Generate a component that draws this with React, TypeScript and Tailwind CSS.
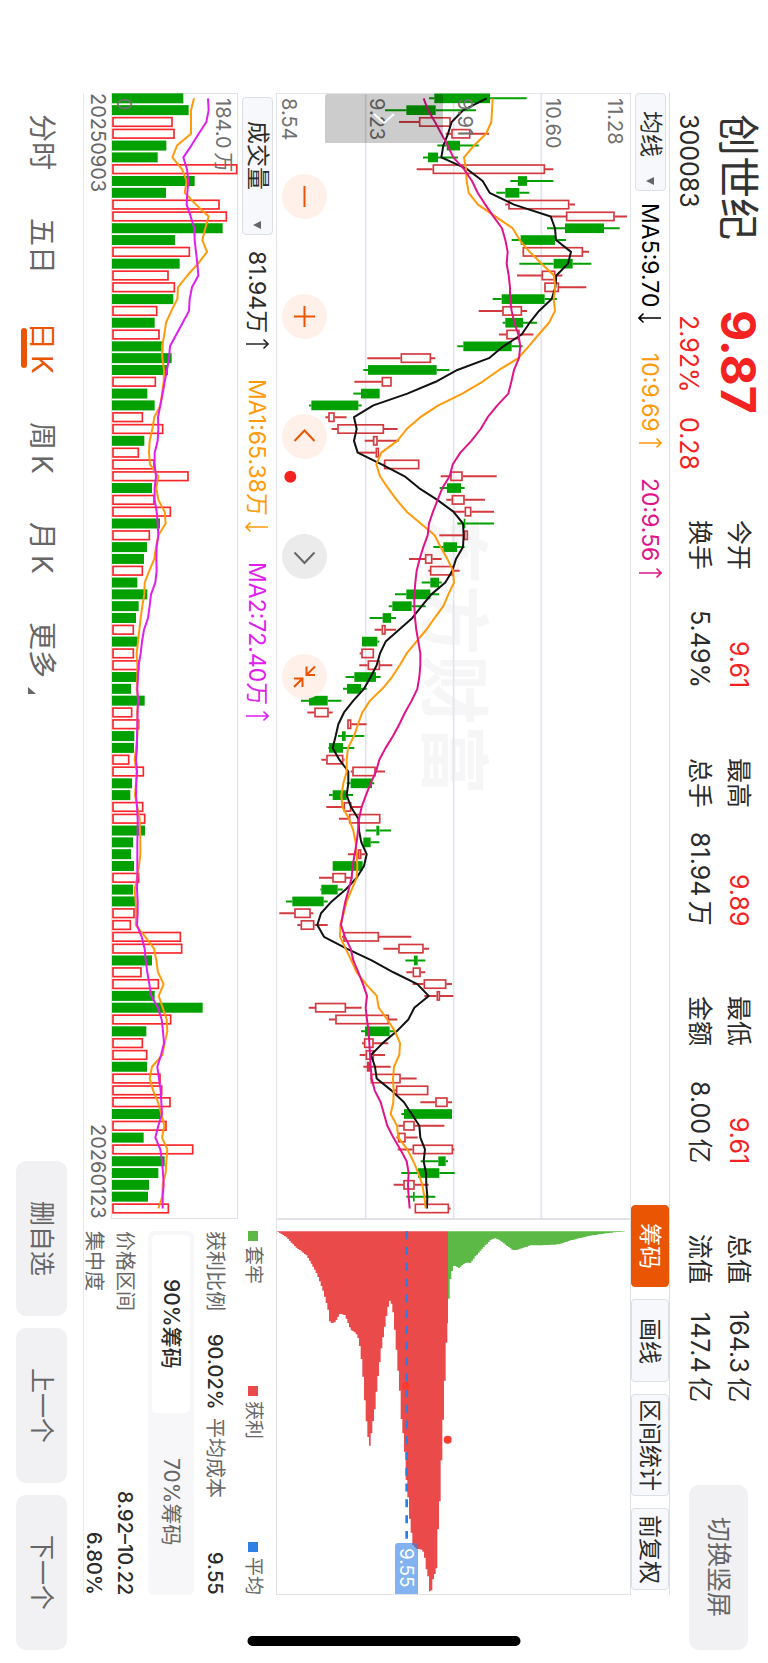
import React from "react";

const GREEN = "#02a000";
const CANDLE_RED = "#d23a40";
const VOLUME_RED = "#f9262b";

// Chart space: three units per pixel, one trading day every STEP units.
const FIRST = 295;
const STEP = 35.43;
const dayY = (i: number) => FIRST + STEP * i;

type Candle = [string, number, number, number, number];

// direction, low, body start, body end, high
const candles: Candle[] = [
  ["g", 1287, 1303, 1470, 1580], ["g", 1155, 1219, 1307, 1428], ["r", 1197, 1257, 1352, 1352],
  ["r", 1337, 1354, 1411, 1467], ["g", 1312, 1340, 1380, 1436], ["g", 1269, 1284, 1314, 1374],
  ["r", 1250, 1298, 1635, 1660], ["g", 1531, 1554, 1581, 1660], ["g", 1489, 1516, 1558, 1588],
  ["r", 1516, 1525, 1708, 1725], ["r", 1652, 1698, 1844, 1881], ["g", 1641, 1695, 1812, 1859],
  ["g", 1535, 1562, 1665, 1698], ["r", 1567, 1568, 1749, 1767], ["g", 1558, 1661, 1718, 1774],
  ["r", 1551, 1625, 1666, 1687], ["r", 1632, 1633, 1677, 1759], ["g", 1478, 1505, 1634, 1671],
  ["r", 1436, 1507, 1566, 1581], ["g", 1508, 1516, 1569, 1611], ["r", 1497, 1519, 1559, 1600],
  ["g", 1372, 1390, 1535, 1568], ["r", 1102, 1202, 1293, 1306], ["g", 1090, 1104, 1310, 1348],
  ["r", 1063, 1145, 1175, 1175], ["g", 1060, 1083, 1139, 1139], ["g", 927, 934, 1075, 1085],
  ["r", 976, 985, 1004, 1040], ["r", 995, 1012, 1152, 1193], ["r", 1094, 1119, 1133, 1196],
  ["r", 1075, 1127, 1137, 1137], ["r", 1150, 1152, 1258, 1258], ["r", 1322, 1351, 1388, 1490],
  ["g", 1319, 1341, 1383, 1394], ["r", 1339, 1355, 1394, 1455], ["r", 1360, 1394, 1414, 1482],
  ["g", 1372, 1391, 1396, 1482], ["r", 1318, 1392, 1404, 1404], ["g", 1300, 1330, 1371, 1394],
  ["r", 1227, 1275, 1297, 1325], ["r", 1285, 1290, 1360, 1379], ["g", 1265, 1291, 1317, 1325],
  ["g", 1185, 1219, 1291, 1317], ["g", 1166, 1177, 1235, 1277], ["g", 1109, 1148, 1173, 1188],
  ["r", 1124, 1145, 1157, 1188], ["g", 1086, 1086, 1132, 1138], ["r", 1079, 1084, 1122, 1122],
  ["r", 1078, 1103, 1140, 1177], ["g", 1037, 1063, 1128, 1142], ["g", 1029, 1041, 1083, 1100],
  ["g", 903, 927, 983, 1024], ["r", 922, 943, 986, 998], ["r", 1041, 1042, 1054, 1100],
  ["g", 1014, 1026, 1037, 1093], ["g", 985, 987, 1029, 1063], ["r", 964, 979, 1030, 1034],
  ["r", 1052, 1057, 1127, 1155], ["g", 1040, 1052, 1116, 1123], ["g", 987, 998, 1040, 1059],
  ["r", 979, 1031, 1054, 1085], ["r", 1017, 1047, 1141, 1142], ["g", 1097, 1129, 1138, 1173],
  ["g", 1088, 1090, 1112, 1138], ["r", 1044, 1074, 1084, 1095], ["g", 998, 998, 1088, 1088],
  ["r", 957, 997, 1038, 1058], ["g", 961, 964, 1013, 1028], ["g", 858, 877, 971, 983],
  ["r", 838, 883, 932, 940], ["r", 892, 902, 943, 983], ["r", 1026, 1030, 1137, 1234],
  ["r", 1150, 1195, 1271, 1287], ["g", 1216, 1242, 1253, 1276], ["r", 1219, 1238, 1262, 1276],
  ["r", 1238, 1271, 1339, 1356], ["r", 1273, 1310, 1320, 1360], ["r", 926, 945, 1038, 1085],
  ["r", 987, 1006, 1167, 1192], ["g", 1083, 1095, 1169, 1182], ["r", 1086, 1092, 1121, 1165],
  ["r", 1079, 1097, 1122, 1155], ["r", 1090, 1101, 1110, 1172], ["r", 1110, 1112, 1202, 1250],
  ["r", 1180, 1188, 1285, 1285], ["r", 1261, 1306, 1343, 1356], ["g", 1204, 1212, 1356, 1356],
  ["r", 1195, 1210, 1244, 1333], ["r", 1189, 1194, 1217, 1253], ["r", 1193, 1238, 1359, 1363],
  ["g", 1262, 1315, 1337, 1344], ["g", 1204, 1254, 1318, 1364], ["r", 1181, 1210, 1244, 1286],
  ["g", 1219, 1239, 1244, 1306], ["r", 1244, 1244, 1347, 1352],
];

const ma5 = [
  1460, 1390, 1355, 1344, 1330, 1324, 1402, 1448, 1469, 1542, 1652, 1665, 1668, 1713, 1704, 1669, 1666, 1655, 1617,
  1589, 1565, 1510, 1467, 1372, 1307, 1222, 1120, 1062, 1070, 1062, 1073, 1145, 1214, 1257, 1312, 1360, 1389, 1391,
  1389, 1368, 1357, 1336, 1294, 1265, 1237, 1197, 1157, 1140, 1130, 1112, 1092, 1060, 1032, 1015, 1007, 998, 1018,
  1045, 1045, 1040, 1053, 1075, 1077, 1084, 1100, 1092, 1070, 1037, 995, 963, 952, 972, 1040, 1115, 1180, 1252, 1286,
  1243, 1225, 1190, 1148, 1113, 1125, 1130, 1174, 1212, 1235, 1258, 1261, 1275, 1271, 1278, 1279, 1282, 1281,
];

const ma10 = [
  1478, 1476, 1474, 1458, 1422, 1392, 1398, 1400, 1406, 1434, 1486, 1538, 1559, 1589, 1625, 1662, 1666, 1661, 1665,
  1647, 1616, 1586, 1555, 1497, 1447, 1387, 1315, 1261, 1220, 1192, 1144, 1129, 1140, 1164, 1190, 1220, 1262, 1304,
  1322, 1342, 1359, 1362, 1345, 1330, 1304, 1279, 1249, 1220, 1199, 1176, 1147, 1110, 1087, 1074, 1062, 1044, 1040,
  1040, 1030, 1024, 1027, 1047, 1060, 1067, 1070, 1072, 1070, 1055, 1040, 1031, 1021, 1020, 1037, 1054, 1070, 1098,
  1130, 1136, 1162, 1185, 1200, 1198, 1182, 1179, 1181, 1180, 1172, 1191, 1195, 1222, 1240, 1255, 1267, 1273, 1277,
];

const ma20 = [
  1271, 1284, 1305, 1324, 1343, 1360, 1392, 1416, 1433, 1456, 1480, 1506, 1516, 1523, 1520, 1526, 1530, 1530, 1535,
  1543, 1555, 1561, 1557, 1542, 1534, 1525, 1492, 1463, 1442, 1414, 1381, 1358, 1349, 1327, 1313, 1299, 1287, 1283,
  1270, 1259, 1250, 1246, 1243, 1243, 1245, 1249, 1255, 1261, 1261, 1258, 1252, 1235, 1215, 1198, 1179, 1157, 1138,
  1128, 1112, 1098, 1085, 1077, 1074, 1070, 1064, 1058, 1055, 1046, 1036, 1029, 1023, 1035, 1052, 1060, 1075, 1089,
  1101, 1097, 1101, 1106, 1108, 1110, 1112, 1115, 1124, 1142, 1152, 1162, 1180, 1201, 1220, 1226, 1224, 1226, 1229,
];

const VOLUME_BASE = 336;
const volumeDirections = [
  "ggrrggrggr",
  "rggrgrrgrg",
  "rgggrggrrg",
  "rrrgrrgrgg",
  "rggggrgrrg",
  "ggrrggrrgg",
  "rrggggrggr",
  "rrrgrrggrg",
  "rrgrrrgrgr",
  "ggggr",
].join("");
const volumes = [
  550, 566, 518, 524, 499, 473, 712, 584, 498, 659, 681, 668, 525, 570, 539, 506, 525, 520, 472, 464, 479, 490, 515,
  504, 468, 442, 464, 429, 490, 433, 417, 464, 566, 456, 464, 513, 480, 450, 441, 432, 429, 412, 442, 416, 408, 402,
  413, 402, 418, 412, 393, 434, 397, 418, 403, 402, 388, 432, 396, 391, 430, 436, 435, 399, 393, 402, 418, 399, 406,
  404, 393, 543, 547, 456, 425, 477, 464, 608, 514, 439, 429, 442, 441, 482, 487, 512, 482, 500, 431, 580, 494, 475,
  447, 444, 507,
];

const volumeMa1 = [
  582, 573, 573, 573, 531, 517, 546, 560, 554, 588, 626, 616, 607, 621, 594, 562, 534, 532, 514, 498, 493, 486, 487,
  492, 491, 486, 481, 463, 457, 449, 447, 450, 475, 469, 475, 494, 497, 475, 468, 463, 448, 434, 433, 427, 422, 418,
  414, 410, 412, 412, 410, 415, 411, 413, 412, 408, 404, 410, 408, 405, 412, 419, 420, 421, 421, 417, 411, 404, 407,
  409, 407, 436, 462, 469, 474, 491, 476, 488, 500, 502, 494, 487, 456, 449, 459, 474, 484, 493, 486, 502, 499, 497,
  488, 487, 475,
];

const volumeMa2 = [
  624, 626, 619, 596, 574, 550, 561, 565, 562, 560, 572, 583, 584, 588, 592, 595, 576, 569, 567, 548, 529, 510, 507,
  501, 494, 488, 481, 474, 475, 473, 464, 464, 468, 464, 464, 470, 473, 475, 470, 469, 470, 466, 453, 449, 444, 432,
  426, 422, 416, 414, 412, 414, 413, 412, 411, 411, 408, 411, 409, 408, 411, 413, 413, 412, 412, 412, 412, 411, 413,
  413, 411, 425, 434, 437, 442, 448, 454, 474, 485, 489, 492, 483, 472, 477, 482, 484, 486, 475, 466, 481, 486, 489,
  491, 488, 488,
];

const linePoints = (values: number[]) => values.map((v, i) => `${v},${dayY(i).toFixed(1)}`).join(" ");

// Chip distribution outline: price position, amount of chips.
const CHIP_BASE = 3694;
const profitOutline: [number, number][] = [
  [832, 0], [860, 18], [886, 46], [920, 72], [938, 103], [948, 121], [960, 151], [969, 176], [976, 202], [983, 228],
  [988, 251], [990, 276], [1006, 273], [1013, 259], [1020, 247], [1035, 251], [1041, 266], [1052, 295], [1067, 304],
  [1074, 318], [1080, 346], [1084, 378], [1089, 429], [1094, 500], [1099, 566], [1103, 600], [1107, 646], [1111, 641],
  [1116, 591], [1121, 559], [1126, 523], [1131, 463], [1136, 421], [1141, 380], [1146, 338], [1151, 309], [1156, 276],
  [1161, 244], [1166, 218], [1170, 206], [1175, 218], [1180, 246], [1185, 300], [1190, 361], [1195, 424], [1200, 484],
  [1204, 559], [1209, 601], [1214, 652], [1219, 741], [1224, 791], [1229, 858], [1234, 900], [1239, 940], [1248, 952],
  [1268, 956], [1274, 975], [1280, 1018], [1286, 1040], [1290, 1086], [1294, 1080], [1300, 1041], [1308, 1018],
  [1312, 1000], [1315, 873], [1319, 873], [1320, 747], [1324, 747], [1325, 626], [1329, 626], [1330, 504], [1334, 504],
  [1335, 391], [1339, 391], [1340, 276], [1344, 276],
];
const trappedOutline: [number, number][] = [
  [1344, 202], [1348, 202], [1349, 143], [1353, 143], [1354, 119], [1358, 119], [1359, 104], [1368, 104], [1376, 110],
  [1386, 102], [1395, 95], [1406, 93], [1410, 97], [1426, 76], [1452, 46], [1475, 24], [1486, 21], [1498, 25],
  [1522, 44], [1538, 56], [1550, 56], [1592, 42], [1622, 42], [1676, 39], [1712, 27], [1772, 13], [1832, 4], [1882, 0],
];

const amountAt = (outline: [number, number][], x: number) => {
  for (let i = 1; i < outline.length; i++) {
    const [x0, a0] = outline[i - 1];
    const [x1, a1] = outline[i];
    if (x <= x1) return a0 + ((a1 - a0) * (x - x0)) / (x1 - x0 || 1);
  }
  return 0;
};

const steppedPath = (outline: [number, number][]) => {
  const start = outline[0][0];
  const end = outline[outline.length - 1][0];
  let d = `M${start} ${CHIP_BASE}`;
  for (let x = start; x < end; x += 5) {
    const next = Math.min(x + 5, end);
    d += `V${(CHIP_BASE + amountAt(outline, (x + next) / 2)).toFixed(0)}H${next}`;
  }
  return `${d}V${CHIP_BASE}Z`;
};

function Arrow({ up = false }: { up?: boolean }) {
  return (
    <svg viewBox="0 0 24 12" className="mt-[5px] h-3 w-6" fill="none" stroke="currentColor" strokeWidth="1.6" aria-hidden>
      {up ? <path d="M1 6H23M18.5 1.5L23 6L18.5 10.5" /> : <path d="M23 6H1M5.500 1.5L1 6L5.500 10.5" />}
    </svg>
  );
}

function Indicator({ text, up, className }: { text: string; up?: boolean; className: string }) {
  return (
    <span className={`flex items-center text-[23px] leading-[30px] ${className}`}>
      {text}
      <Arrow up={up} />
    </span>
  );
}

function Picker({ label, value, className }: { label: string; value: string; className: string }) {
  return (
    <span className="relative flex w-[31px]">
      <select
        aria-label={label}
        defaultValue={value}
        className={`w-full appearance-none rounded-[4px] border border-[#dcdfe5] bg-[#f7f8fb] text-[23px] leading-[29px] text-[#2a2a2a] [text-orientation:sideways] [writing-mode:vertical-rl] ${className}`}
      >
        <option>{value}</option>
      </select>
      <svg viewBox="0 0 8 8" className="pointer-events-none absolute bottom-[6px] left-[11px] size-2 fill-[#666]" aria-hidden>
        <path d="M0 4L8 0V8Z" />
      </svg>
    </span>
  );
}

const stats = [
  [["今开", "9.61", true], ["换手", "5.49%", false]],
  [["最高", "9.89", true], ["总手", "81.94\u2009万", false]],
  [["最低", "9.61", true], ["金额", "8.00\u2009亿", false]],
  [["总值", "164.3\u2009亿", false], ["流值", "147.4\u2009亿", false]],
] as [string, string, boolean][][];

function Header() {
  return (
    <header className="flex w-[98px] shrink-0 items-start pt-[114px] pb-[13px]">
      <div className="h-[196px]">
        <h1 className="text-[42px] leading-[60px] text-[#333]">创世纪</h1>
        <p className="text-[25px] leading-[38px] text-[#2a2a2a]">300083</p>
      </div>
      <div className="h-[210px] text-[#f52222]">
        <p className="text-[48px] leading-[60px] font-bold">9.87</p>
        <p className="flex gap-6 pt-[5px] text-[25px] leading-[38px]">
          <span>2.92%</span>
          <span>0.28</span>
        </p>
      </div>
      <div className="flex gap-[70px] pr-[10px] text-[25px] leading-[39px] text-[#2a2a2a]">
        {stats.map((column) => (
          <dl key={column[0][0] + column[1][0]} className="h-[168px]">
            {column.map(([name, value, rising]) => (
              <div key={name} className="flex justify-between">
                <dt>{name}</dt>
                <dd className={rising ? "text-[#f52222]" : ""}>{value}</dd>
              </div>
            ))}
          </dl>
        ))}
      </div>
      <button className="mt-auto mr-5 h-[165px] w-[59px] rounded-[10px] bg-[#f1f1f4] text-[25px] text-[#666]">切换竖屏</button>
    </header>
  );
}

const tools = [
  ["筹码", "h-[82px] bg-[#ea5504] text-white border-[#ea5504]"],
  ["画线", "h-[83px] bg-[#f7f8fb] text-[#2a2a2a] border-[#dcdfe5]"],
  ["区间统计", "h-[102px] bg-[#f7f8fb] text-[#2a2a2a] border-[#dcdfe5]"],
  ["前复权", "h-[82px] bg-[#f7f8fb] text-[#2a2a2a] border-[#dcdfe5]"],
];

function AverageBar() {
  return (
    <div className="mt-[93px] mb-[68px] flex w-[39px] shrink-0 items-center border-r border-[#dcdfe5] pb-[5px]">
      <Picker label="主图指标" value="均线" className="h-[98px] pt-[17px]" />
      <div className="flex gap-[29px] pt-3">
        <Indicator text="MA5:9.70" className="text-black" />
        <Indicator text="10:9.69" up className="text-[#ff9a0a]" />
        <Indicator text="20:9.56" up className="text-[#e0148a]" />
      </div>
      <div className="mt-auto flex w-full gap-3">
        {tools.map(([name, look]) => (
          <button key={name} className={`w-full rounded-[4px] border text-[23px] whitespace-nowrap ${look}`}>
            {name}
          </button>
        ))}
      </div>
    </div>
  );
}

const zoomButtons = [
  { name: "缩小", d: "M22.500 12V33", look: "bg-[#fff0e9] text-[#ea5504]" },
  { name: "放大", d: "M22.500 12V33M12 22.500H33", look: "bg-[#fff0e9] text-[#ea5504]" },
  { name: "左移", d: "M12.500 27L22.500 16.500L32.500 27", look: "bg-[#fff0e9] text-[#ea5504]" },
  { name: "右移", d: "M12.500 18.500L22.500 29L32.500 18.500", look: "bg-[#ebebeb] text-[#666]" },
  {
    name: "收起",
    d: "M24.500 12.500V21H33M33 12.500L24.500 21M12 24.500H20.500V33M12 33L20.500 24.500",
    look: "bg-[#fff0e9] text-[#ea5504]",
  },
];

function PriceChart() {
  return (
    <div className="relative min-w-0 flex-1 border border-[#e2e4ea]">
      <span className="absolute top-[421px] left-[140px] text-[70px] leading-[72px] font-bold text-[#f6f6f7]">东方财富</span>
      <svg
        viewBox="828 279 1065 3378"
        preserveAspectRatio="none"
        className="absolute -top-px -left-px h-[calc(100%+2px)] w-[calc(100%+2px)]"
        aria-hidden
      >
        <path d="M1097 279V3657M1361 279V3657M1624 279V3657" stroke="#e1e4ee" strokeWidth="5" />
        {candles.map(([direction, low, open, close, high], i) => {
          const y = dayY(i);
          const color = direction === "g" ? GREEN : CANDLE_RED;
          return (
            <g key={i} stroke={color} strokeWidth="6">
              <path d={`M${low} ${y}H${open}M${close} ${y}H${high}`} />
              {direction === "g" ? (
                <rect x={open} y={y - 14.5} width={close - open} height="29" fill={color} stroke="none" />
              ) : (
                <rect x={open + 2} y={y - 12.5} width={Math.max(close - open - 4, 4)} height="25" fill="none" strokeWidth="5" />
              )}
            </g>
          );
        })}
        <g fill="none" strokeWidth="6" strokeLinejoin="round">
          <polyline points={linePoints(ma5)} stroke="#111" />
          <polyline points={linePoints(ma10)} stroke="#ff9a0a" />
          <polyline points={linePoints(ma20)} stroke="#e0148a" />
        </g>
        <circle cx="871" cy="1430" r="18" fill="#f52222" />
      </svg>
      <div className="text-[20px] leading-6 text-[#6f6f6f]">
        <span className="absolute top-1 right-[3px]">11.28</span>
        <span className="absolute top-1 left-[264px]">10.60</span>
        <span className="absolute top-1 left-[176px]">9.91</span>
        <span className="absolute top-1 left-[88px]">9.23</span>
        <span className="absolute top-1 left-0">8.54</span>
      </div>
      <button aria-label="展开" className="absolute top-0 left-[48px] h-[49px] w-[118px] rounded-tl-[3px] rounded-tr-[3px] bg-black/20">
        <svg viewBox="0 0 118 49" className="size-full" fill="none" stroke="#fff" strokeWidth="2" aria-hidden>
          <path d="M49 20L59 29L69 20" />
        </svg>
      </button>
      <div className="absolute top-20 left-[5px] flex gap-[75px]">
        {zoomButtons.map(({ name, d, look }) => (
          <button key={name} aria-label={name} className={`size-[45px] rounded-full ${look}`}>
            <svg viewBox="0 0 45 45" className="size-full" fill="none" stroke="currentColor" strokeWidth="2" aria-hidden>
              <path d={d} />
            </svg>
          </button>
        ))}
      </div>
    </div>
  );
}

function VolumeChart() {
  return (
    <div className="relative w-[127px] shrink-0 border border-[#dfe1e8]">
      <svg
        viewBox="333 279 381 3378"
        preserveAspectRatio="none"
        className="absolute -top-px -left-px h-[calc(100%+2px)] w-[calc(100%+2px)]"
        aria-hidden
      >
        {volumes.map((end, i) => {
          const y = dayY(i);
          return volumeDirections[i] === "g" ? (
            <rect key={i} x={VOLUME_BASE} y={y - 15} width={end - VOLUME_BASE} height="30" fill={GREEN} />
          ) : (
            <rect
              key={i}
              x={VOLUME_BASE + 3}
              y={y - 13}
              width={end - VOLUME_BASE - 5}
              height="26"
              fill="none"
              stroke={VOLUME_RED}
              strokeWidth="5"
            />
          );
        })}
        <g fill="none" strokeWidth="6" strokeLinejoin="round">
          <polyline points={linePoints(volumeMa1)} stroke="#ff9a0a" />
          <polyline points={linePoints(volumeMa2)} stroke="#e01ef0" />
        </g>
      </svg>
      <div className="text-[20px] leading-6 text-[#6f6f6f]">
        <span className="absolute top-1 right-[2px]">184.0{"\u2009"}万</span>
        <span className="absolute top-1 left-0">0</span>
      </div>
    </div>
  );
}

const legend = [
  ["套牢", "bg-[#5cb946]"],
  ["获利", "bg-[#eb4a4b]"],
  ["平均", "bg-[#2f80e6]"],
];

function ChipPanel() {
  return (
    <section className="flex h-[376px] shrink-0 flex-col">
      <div className="relative min-w-0 flex-1 border border-[#dfe1e6]">
        <svg
          viewBox="828 3657 1065 1128"
          preserveAspectRatio="none"
          className="absolute -top-px -left-px h-[calc(100%+2px)] w-[calc(100%+2px)]"
          aria-hidden
        >
          <path d={steppedPath(profitOutline)} fill="#eb4a4b" />
          <path d={steppedPath(trappedOutline)} fill="#5cb946" />
          <path d="M1220 3694V4616" stroke="#2b7fe8" strokeWidth="8" strokeDasharray="24 23.300" />
          <circle cx="1218" cy="4159" r="12" fill="#ff3b30" />
          <circle cx="1343" cy="4319" r="12" fill="#ff3b30" />
        </svg>
        <span className="absolute bottom-0 left-[118px] w-[23px] rounded-t-[3px] bg-[#2f80e6]/60 pt-[5px] pb-[6px] text-[19px] leading-[23px] text-white">
          9.55
        </span>
      </div>
      <div className="flex w-[192px] shrink-0 flex-col pt-3 text-[19px] leading-6 text-[#666]">
        <ul className="mr-[2px] flex w-[42px] shrink-0 items-center justify-between">
          {legend.map(([name, color]) => (
            <li key={name} className="flex items-center gap-[5px]">
              <span className={`size-[10px] ${color}`} />
              {name}
            </li>
          ))}
        </ul>
        <dl className="flex w-[34px] shrink-0 items-center justify-between text-[20px]">
          <dt>获利比例</dt>
          <dd className="pt-[15px] font-medium text-[#2a2a2a]">90.02%</dd>
          <dt>平均成本</dt>
          <dd className="pt-[46px] font-medium text-[#2a2a2a]">9.55</dd>
        </dl>
        <div className="mr-1 flex w-[46px] shrink-0 rounded-[6px] bg-[#f7f7f9] p-1 text-[21px]">
          <button aria-pressed className="min-h-0 flex-1 rounded-[5px] bg-white font-medium text-[#2a2a2a]">
            90%筹码
          </button>
          <button className="min-h-0 flex-1">70%筹码</button>
        </div>
        <dl className="mr-2 shrink-0 text-[20px] leading-[31px]">
          <div className="flex justify-between">
            <dt>价格区间</dt>
            <dd className="font-medium text-[#2a2a2a]">8.92–10.22</dd>
          </div>
          <div className="flex justify-between">
            <dt>集中度</dt>
            <dd className="font-medium text-[#2a2a2a]">6.80%</dd>
          </div>
        </dl>
      </div>
    </section>
  );
}

const periods = ["分时", "五日", "日\u2009K", "周\u2009K", "月\u2009K"];

function BottomBar() {
  return (
    <footer className="flex w-[83px] shrink-0 items-center pt-[114px] pb-[13px]">
      <nav className="flex gap-12 text-[28px] leading-[42px] text-[#666]">
        {periods.map((name) =>
          name.startsWith("日") ? (
            <button key={name} aria-current="page" className="relative text-[#ea5504]">
              {name}
              <span className="absolute top-[6px] bottom-[6px] left-0 w-[6px] rounded-full bg-[#ea5504]" />
            </button>
          ) : (
            <button key={name}>{name}</button>
          ),
        )}
        <button className="flex gap-2">
          更多
          <svg viewBox="0 0 8 8" className="ml-[7px] size-2 self-end fill-[#666]" aria-hidden>
            <path d="M0 1L8 8H0Z" />
          </svg>
        </button>
      </nav>
      <div className="mt-auto flex gap-3">
        {["删自选", "上一个", "下一个"].map((name) => (
          <button key={name} className="h-[155px] w-[51px] rounded-[10px] bg-[#f1f1f4] text-[25px] text-[#666]">
            {name}
          </button>
        ))}
      </div>
    </footer>
  );
}

export default function App() {
  return (
    <main className="relative flex h-screen w-full flex-col overflow-hidden bg-white font-['Inter','Noto_Sans_CJK_SC',sans-serif] [text-orientation:sideways] [writing-mode:vertical-rl]">
      <Header />
      <AverageBar />
      <div className="mt-[93px] mb-[68px] flex min-w-0 flex-1 border-l border-[#e6e8ec]">
        <section className="flex min-h-0 flex-1 flex-col">
          <PriceChart />
          <div className="flex w-[38px] shrink-0 items-center pt-1">
            <Picker label="副图指标" value="成交量" className="h-[138px] pt-[23px]" />
            <div className="flex gap-[29px] pt-4">
              <Indicator text="81.94万" up className="text-[#2a2a2a]" />
              <Indicator text="MA1:65.38万" className="text-[#ff9a0a]" />
              <Indicator text="MA2:72.40万" up className="text-[#e01ef0]" />
            </div>
          </div>
          <VolumeChart />
          <div className="flex w-[27px] shrink-0 items-center justify-between text-[20px] leading-6 text-[#666]">
            <time>20250903</time>
            <time>20260123</time>
          </div>
        </section>
        <ChipPanel />
      </div>
      <BottomBar />
      <div className="absolute bottom-[17px] left-1/2 h-[10px] w-[273px] -translate-x-1/2 rounded-full bg-black" />
    </main>
  );
}
